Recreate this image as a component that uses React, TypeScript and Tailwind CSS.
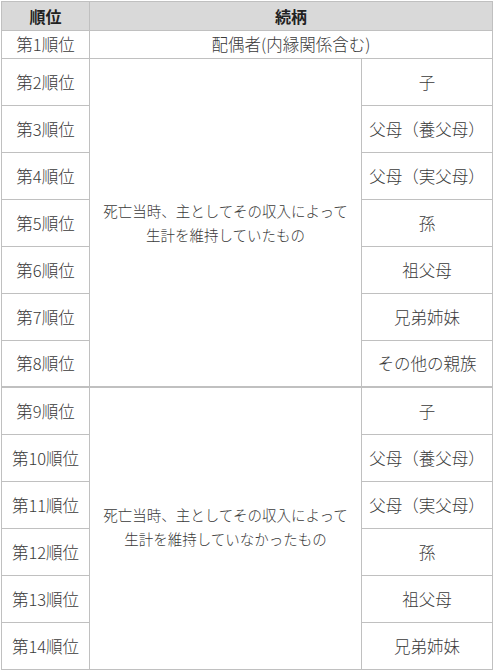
import React from "react";

const ranks1 = ["子", "父母（養父母）", "父母（実父母）", "孫", "祖父母", "兄弟姉妹", "その他の親族"];
const ranks2 = ["子", "父母（養父母）", "父母（実父母）", "孫", "祖父母", "兄弟姉妹"];

const cell = "flex items-center justify-center border-r border-b border-[#c0c0c0]";

const App = () => {
  return (
    <div className="min-h-screen bg-white pt-px pl-px font-['Noto_Sans_CJK_JP',sans-serif] font-light text-[#3a3a3a]">
      <div className="grid w-[492px] grid-cols-[88px_272px_131px] grid-rows-[29px_28px_repeat(13,47px)] border-t border-l border-[#c0c0c0]">
        {/* header */}
        <div className={`${cell} bg-[#d9d9d9] text-[16px] font-bold text-[#222]`}>順位</div>
        <div className={`${cell} col-span-2 bg-[#d9d9d9] text-[16px] font-bold text-[#222]`}>続柄</div>

        {/* 1 */}
        <div className={`${cell} text-[16.5px]`}>第1順位</div>
        <div className={`${cell} col-span-2 text-[16.5px]`}>配偶者(内縁関係含む)</div>

        {/* 2-8 */}
        <div className={`${cell} text-[16.5px]`}>第2順位</div>
        <div className={`${cell} row-span-7 border-b-2 flex-col text-[14.5px] leading-[24px]`}>
          <span>死亡当時、主としてその収入によって</span>
          <span>生計を維持していたもの</span>
        </div>
        <div className={`${cell} text-[16.5px]`}>{ranks1[0]}</div>
        {ranks1.slice(1).map((r, i) => {
          const last = i === ranks1.length - 2;
          return (
            <React.Fragment key={"a" + i}>
              <div className={`${cell} text-[16.5px] ${last ? "border-b-2" : ""}`}>第{i + 3}順位</div>
              <div className={`${cell} text-[16.5px] ${last ? "border-b-2" : ""}`}>{r}</div>
            </React.Fragment>
          );
        })}

        {/* 9-14 */}
        <div className={`${cell} text-[16.5px]`}>第9順位</div>
        <div className={`${cell} row-span-6 flex-col pb-1 text-[14.5px] leading-[24px]`}>
          <span>死亡当時、主としてその収入によって</span>
          <span>生計を維持していなかったもの</span>
        </div>
        <div className={`${cell} text-[16.5px]`}>{ranks2[0]}</div>
        {ranks2.slice(1).map((r, i) => (
          <React.Fragment key={"b" + i}>
            <div className={`${cell} text-[16.5px]`}>第{i + 10}順位</div>
            <div className={`${cell} text-[16.5px]`}>{r}</div>
          </React.Fragment>
        ))}
      </div>
    </div>
  );
};

export default App;
